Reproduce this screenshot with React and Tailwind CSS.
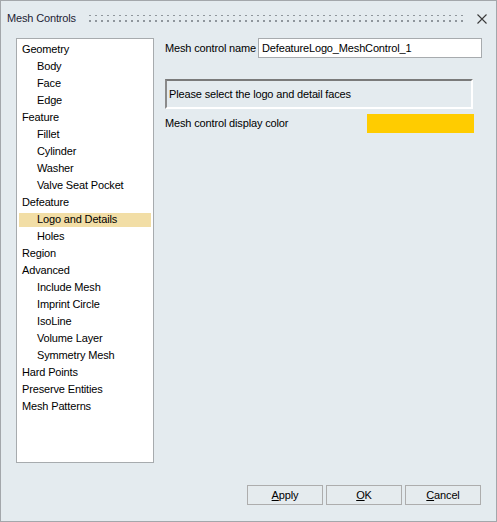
import React from "react";

const items = [
  ["Geometry", 0],
  ["Body", 1],
  ["Face", 1],
  ["Edge", 1],
  ["Feature", 0],
  ["Fillet", 1],
  ["Cylinder", 1],
  ["Washer", 1],
  ["Valve Seat Pocket", 1],
  ["Defeature", 0],
  ["Logo and Details", 1, true],
  ["Holes", 1],
  ["Region", 0],
  ["Advanced", 0],
  ["Include Mesh", 1],
  ["Imprint Circle", 1],
  ["IsoLine", 1],
  ["Volume Layer", 1],
  ["Symmetry Mesh", 1],
  ["Hard Points", 0],
  ["Preserve Entities", 0],
  ["Mesh Patterns", 0],
];

function Btn({ first, rest }) {
  return (
    <button className="w-[76px] h-[20px] border border-[#adadad] bg-[#e5ebee] flex items-center justify-center text-[11px] tracking-[-0.15px] text-black">
      <span>
        <span className="underline underline-offset-[1px]">{first}</span>
        {rest}
      </span>
    </button>
  );
}

export default function App() {
  return (
    <div
      className="w-[497px] h-[522px] border border-[#a3a7ab] bg-[#e4ebef] flex flex-col text-black tracking-[-0.15px]"
      style={{ fontFamily: '"Liberation Sans", Arial, sans-serif' }}
    >
      {/* title bar */}
      <div className="h-[35px] flex items-center pl-[6px] pr-[8px]">
        <span className="text-[11px] text-[#1d1d35]">Mesh Controls</span>
        <svg className="ml-[13px] flex-1 h-[10px]" height="10">
          <defs>
            <pattern id="dots" width="6" height="6" patternUnits="userSpaceOnUse">
              <rect x="0" y="0" width="2" height="2" fill="#8f969c" />
            </pattern>
          </defs>
          <rect x="0" y="1" width="100%" height="8" fill="url(#dots)" />
        </svg>
        <svg className="ml-[9px]" width="12" height="12" viewBox="0 0 12 12">
          <path d="M1.5 1.5 L10.5 10.5 M10.5 1.5 L1.5 10.5" stroke="#3a3a3a" strokeWidth="1.1" fill="none" />
        </svg>
      </div>

      {/* body */}
      <div className="flex mt-[2px] pl-[15px]">
        <div className="w-[138px] h-[425px] bg-white border border-[#a7abae] pt-[2px]">
          {items.map(([label, lvl, sel]) => (
            <div key={label} className="h-[17px] flex items-center px-[2px]">
              <div
                className={
                  "h-[14px] w-full flex items-center text-[11px] whitespace-nowrap " +
                  (lvl ? "pl-[18px] " : "pl-[3px] ") +
                  (sel ? "bg-[#f2dea6]" : "")
                }
              >
                {label}
              </div>
            </div>
          ))}
        </div>

        <div className="ml-[11px] flex flex-col">
          <div className="flex items-center h-[20px]">
            <span className="text-[11px] w-[93px] whitespace-nowrap">Mesh control name</span>
            <div className="w-[224px] h-[20px] bg-white border border-[#a7abae] flex items-center pl-[3px] text-[11px]">
              DefeatureLogo_MeshControl_1
            </div>
          </div>

          <div className="mt-[21px] w-[308px] h-[30px] border-t-2 border-l-2 border-t-[#7a7a7a] border-l-[#8a8a8a] border-b-2 border-r-2 border-b-white border-r-white flex items-center pl-[2px] text-[11px]">
            Please select the logo and detail faces
          </div>

          <div className="mt-[5px] flex items-center h-[19px]">
            <span className="text-[11px] w-[202px] whitespace-nowrap">Mesh control display color</span>
            <div className="w-[107px] h-[19px] bg-[#ffcc00]" />
          </div>
        </div>
      </div>

      {/* buttons */}
      <div className="mt-[22px] flex justify-end gap-[3px] pr-[15px]">
        <Btn first="A" rest="pply" />
        <Btn first="O" rest="K" />
        <Btn first="C" rest="ancel" />
      </div>
    </div>
  );
}
